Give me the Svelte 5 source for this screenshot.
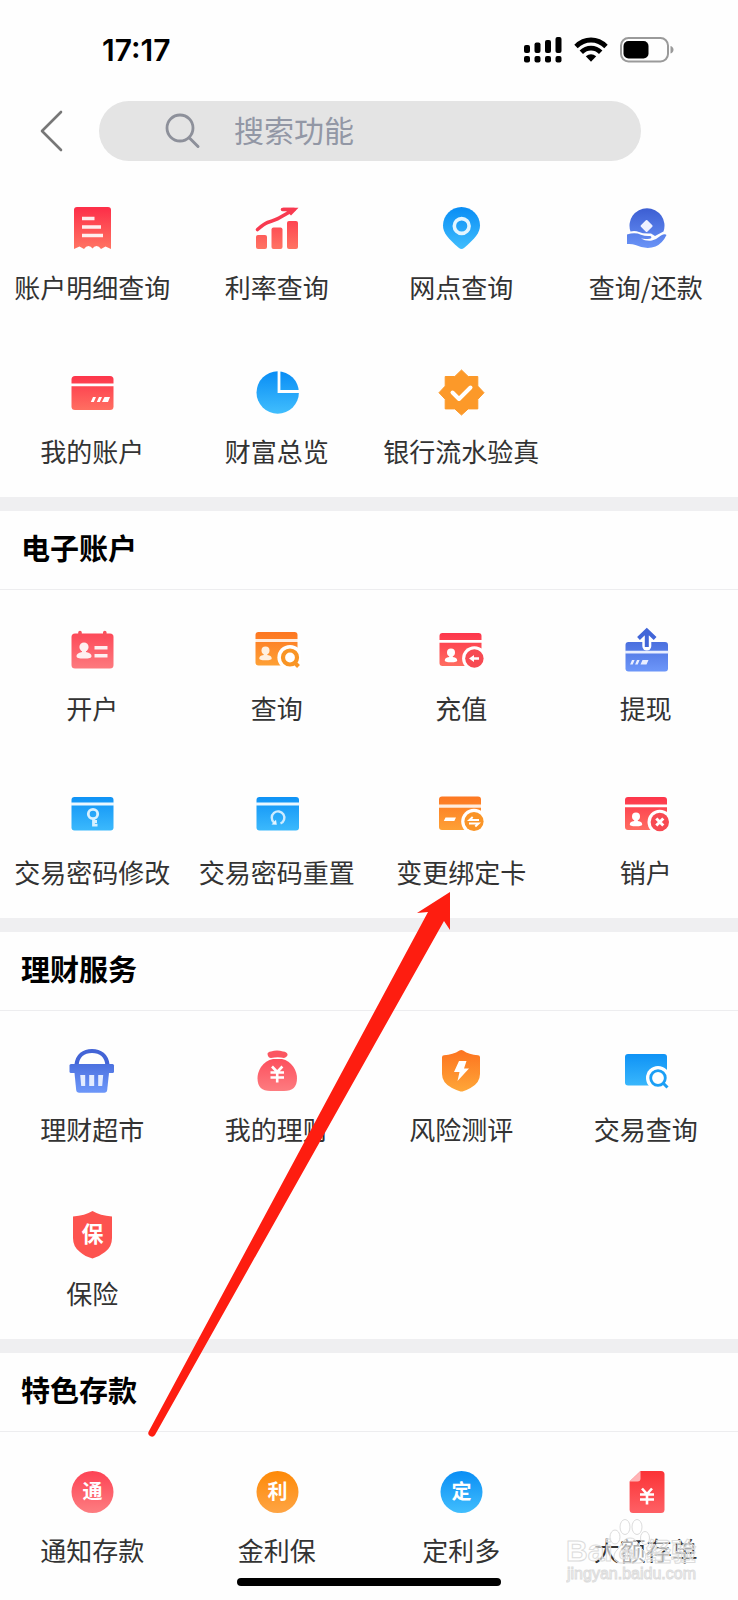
<script>
  const sections = [
    {
      id: 'common',
      items: [
        { icon: 'receipt', label: '账户明细查询' },
        { icon: 'rate', label: '利率查询' },
        { icon: 'pin', label: '网点查询' },
        { icon: 'repay', label: '查询/还款' },
        { icon: 'card', label: '我的账户' },
        { icon: 'pie', label: '财富总览' },
        { icon: 'verified', label: '银行流水验真' }
      ]
    },
    {
      id: 'account',
      title: '电子账户',
      items: [
        { icon: 'open', label: '开户' },
        { icon: 'cardSearch', label: '查询' },
        { icon: 'recharge', label: '充值' },
        { icon: 'withdraw', label: '提现' },
        { icon: 'key', label: '交易密码修改' },
        { icon: 'reset', label: '交易密码重置' },
        { icon: 'swap', label: '变更绑定卡' },
        { icon: 'close', label: '销户' }
      ]
    },
    {
      id: 'wealth',
      title: '理财服务',
      items: [
        { icon: 'basket', label: '理财超市' },
        { icon: 'bag', label: '我的理财' },
        { icon: 'risk', label: '风险测评' },
        { icon: 'tradeSearch', label: '交易查询' },
        { icon: 'insurance', label: '保险' }
      ]
    },
    {
      id: 'deposit',
      title: '特色存款',
      items: [
        { icon: 'coin', label: '通知存款', char: '通', fill: 'rose' },
        { icon: 'coin', label: '金利保', char: '利', fill: 'amber' },
        { icon: 'coin', label: '定利多', char: '定', fill: 'blue' },
        { icon: 'doc', label: '大额存单' }
      ]
    }
  ];

  const gradients = [
    { id: 'red', from: '#fd3049', to: '#ff7463' },
    { id: 'rose', from: '#fd4455', to: '#fd7c80' },
    { id: 'crimson', from: '#fb3437', to: '#fe5f64' },
    { id: 'orange', from: '#fd7420', to: '#fea638' },
    { id: 'amber', from: '#fe8a08', to: '#fea443' },
    { id: 'blue', from: '#0b8ff5', to: '#40bdfd' },
    { id: 'indigo', from: '#3d5fd3', to: '#6b95f8' }
  ];

  let keyword = $state('');
</script>

{#snippet person(x, y)}
  <circle cx={x} cy={y} r="4" />
  <path d="M{x - 1.8} {y + 2}h3.6v2.6c3.4.6 4.4 1.8 4.4 3.4 0 1.2-1.8 1.8-6.2 1.8s-6.2-.6-6.2-1.8c0-1.6 1-2.8 4.4-3.4z" />
{/snippet}

{#snippet icon(item)}
  <svg class="icon" viewBox="0 0 48 48" aria-hidden="true">
    {#if item.icon === 'receipt'}
      <path fill="url(#red)" d="M9 2h31a3 3 0 0 1 3 3v39l-5.500-2.500-4.500 2.500q-2-3-4.500-3t-4 2.500q-1.500-2.500-4-2.500T16 44l-4.500-2.500L6 44V5a3 3 0 0 1 3-3z" />
      <path stroke="#fff" stroke-width="3.400" d="M14 13.500h12.500M14 22h19M14 30.500h21" opacity=".9" />
    {:else if item.icon === 'rate'}
      <g fill="url(#red)">
        <rect x="3" y="30" width="11" height="14" rx="2" />
        <rect x="18.500" y="22.500" width="11" height="21.500" rx="2" />
        <rect x="34" y="16" width="11" height="28" rx="2" />
      </g>
      <path fill="none" stroke="#f83a50" stroke-width="3.600" stroke-linecap="round" stroke-linejoin="round" d="M4.500 24.500q7-6 10-7 9-3 11.500-4.500L41 4.500H29.500" />
      <path fill="#f83a50" d="M30 2.700h15.500L38 10.500z" />
    {:else if item.icon === 'pin'}
      <path fill="url(#blue)" d="M24.500 2C14.300 2 6 10.300 6 20.500c0 7.500 5.200 13 16 22.600q2.500 2 5 0C37.800 33.500 43 28 43 20.500 43 10.300 34.700 2 24.500 2z" />
      <circle cx="24.700" cy="21" r="7.400" fill="none" stroke="#e3f5ff" stroke-width="3.600" />
    {:else if item.icon === 'repay'}
      <path fill="url(#indigo)" d="M8.500 26.500A17.500 17.500 0 1 1 41.500 26.500L33 31l-4-2.500q-8 .5-12-1.500-4-1.500-8.500-.5z" />
      <path fill="#eef1ff" stroke="#eef1ff" stroke-width="2" stroke-linejoin="round" d="M24.600 16l5 5-5 5-5-5z" />
      <path fill="url(#indigo)" d="M5 29.500q8-2.500 14 .2 4 1.600 8.500 1.300c2.500 0 2.500 2.500.2 2.700q-5 .6-8.700-.2 5 3 11 2 5-1.500 9-5 4-2 5.500-.5-4 8.500-11 11.500-9 3.500-20-1.500-4-1.500-8.500-1z" />
    {:else if item.icon === 'card'}
      <rect x="3.500" y="7" width="42" height="34" rx="3.500" fill="url(#red)" />
      <path fill="#fff" d="M3 14.500h43v2.800H3zM25 28h3l-2.200 5h-3zM31 28h3l-2.200 5h-3zM36.500 28h5.500l-2 5h-6z" />
    {:else if item.icon === 'pie'}
      <circle cx="24.700" cy="23.500" r="21.200" fill="url(#blue)" />
      <path fill="none" stroke="#fff" stroke-width="2.800" d="M26 1v21.500h21" />
    {:else if item.icon === 'verified'}
      <path fill="#fc9929" stroke="#fc9929" stroke-linejoin="round" d="M24.500 1l6.700 6.500h9.600v9.600l6.200 6.600-6.200 6.600v9.600h-9.600l-6.700 6.100-6.700-6.100H8.200v-9.600L2 23.700l6.200-6.600V7.500h9.600z" />
      <path fill="none" stroke="#fff" stroke-width="4" stroke-linecap="round" stroke-linejoin="round" d="M15.500 23.500l6.500 6.500 11.500-11.500" />
    {:else if item.icon === 'open'}
      <rect x="3.500" y="7.500" width="42" height="35" rx="3.500" fill="url(#rose)" />
      <path stroke="#f8505c" stroke-width="3.600" stroke-linecap="round" d="M12 6.500v4.500M36.800 6.500v4.500" />
      <g fill="#fff" opacity=".9">
        <circle cx="16" cy="21" r="4.600" />
        <path d="M14 23h4v3c4 .8 5.500 2.300 5.500 4 0 2-2 2.600-7.500 2.600S8.500 32 8.500 30c0-1.700 1.500-3.200 5.500-4z" />
        <path d="M26.500 20h13v3.400h-13zM26.500 28h13v3.400h-13z" />
      </g>
    {:else if item.icon === 'cardSearch'}
      <rect x="2.500" y="6" width="42" height="33.500" rx="3" fill="url(#orange)" />
      <path fill="#fff" opacity=".85" d="M2 13h43v3H2z" />
      <g fill="#fff0df">{@render person(12.500, 24.500)}</g>
      <circle cx="37" cy="31.500" r="12.600" fill="#fff" />
      <circle cx="37" cy="31.500" r="7" fill="none" stroke="#f99525" stroke-width="4.200" />
      <path stroke="#f99525" stroke-width="4" d="M41 36l4.500 4.500" />
    {:else if item.icon === 'recharge'}
      <rect x="2.500" y="7" width="42" height="33" rx="3" fill="url(#red)" />
      <path fill="#fff" d="M2 14h43v2.800H2z" />
      <g fill="#fff">{@render person(14, 26.500)}</g>
      <circle cx="37.400" cy="32.500" r="12.300" fill="#fff" />
      <circle cx="37.400" cy="32.500" r="9.200" fill="#f74a52" />
      <path fill="#fff" d="M32 32.500l5-3.500v2.300h5v2.400h-5V36z" />
    {:else if item.icon === 'withdraw'}
      <rect x="3.500" y="16" width="42.500" height="29.500" rx="3" fill="url(#indigo)" />
      <path fill="#e8eeff" d="M3 24.800h43.500v2.800H3zM10 34h2.600l-1.900 4.500H8.100zM15 34h2.600l-1.900 4.500h-2.600zM20.500 34h6l-2 4.500h-6z" />
      <path fill="none" stroke="#fff" stroke-width="9" stroke-linecap="round" d="M24.800 10v10" />
      <path fill="none" stroke="#4165d8" stroke-width="4" stroke-linejoin="miter" d="M16.500 12.500l8.300-8 8.300 8M24.800 5v16" />
    {:else if item.icon === 'key'}
      <rect x="3.500" y="7" width="42" height="33.500" rx="3" fill="url(#blue)" />
      <path fill="#eaf7ff" d="M3 12.600h43v2.800H3z" />
      <g fill="none" stroke="#d8f1ff" stroke-width="2.800">
        <circle cx="25" cy="24" r="4.700" />
        <path d="M25.500 28.500V36.500M26 31.500h3M26 35.200h3.500" />
      </g>
    {:else if item.icon === 'reset'}
      <rect x="3.500" y="7" width="42.500" height="33.500" rx="3" fill="url(#blue)" />
      <path fill="#eaf7ff" d="M3 12.600h43.500v2.800H3z" />
      <path fill="none" stroke="#cdebff" stroke-width="2.400" d="M27.500 33.500a6.300 6.300 0 1 0-6.500-1" />
      <path fill="#e6f6ff" d="M18.500 34.500l5.300.3-.8-5z" />
    {:else if item.icon === 'swap'}
      <rect x="2" y="6.500" width="42" height="33.500" rx="3" fill="url(#orange)" />
      <path fill="#fff" opacity=".85" d="M1 14.500h44v3.200H1z" />
      <path fill="#fff" d="M8.500 27.500H19l-1.700 3.600H6.800z" />
      <circle cx="37" cy="31.500" r="12.800" fill="#fff" />
      <circle cx="37" cy="31.500" r="9.600" fill="#fa9528" />
      <path fill="none" stroke="#fff" stroke-width="2" d="M42 30H32.500l3.200-3M32 33.500h9.500l-3.200 3" />
    {:else if item.icon === 'close'}
      <rect x="3" y="7" width="42" height="33" rx="3" fill="url(#red)" />
      <path fill="#fff" d="M2 14.500h44v2.800H2z" />
      <g fill="#fff">{@render person(14, 26.500)}</g>
      <circle cx="37.800" cy="32" r="12.300" fill="#fff" />
      <circle cx="37.800" cy="32" r="9.200" fill="#f74a52" />
      <path stroke="#fff" stroke-width="3" d="M34.300 28.500l7 7M41.300 28.500l-7 7" />
    {:else if item.icon === 'basket'}
      <path fill="none" stroke="#4364d6" stroke-width="4.200" d="M8.500 18C9.500 8.500 16 4 24 4s14.500 4.500 15.500 14" />
      <rect x="1.500" y="17" width="44.500" height="9" rx="1.500" fill="url(#indigo)" />
      <path fill="url(#indigo)" d="M6.500 26h34.500l-1.800 17q-.3 2.700-3 2.700h-25q-2.700 0-3-2.700z" />
      <path fill="#e3ecff" d="M12.200 28h5v11h-4zM21.200 28h5v11h-5zM30.200 28h5l-1 11h-4z" />
    {:else if item.icon === 'bag'}
      <path fill="#fb5661" d="M14.500 7q0-2 3.500-2.500 6-1.800 12 0 4 .5 4.500 2.800T31 11q-6-1.600-13 0-3 0-3.500-4z" />
      <path fill="url(#rose)" d="M20 12h9q7 1.500 11.500 8 3.500 5.500 3.500 11.500 0 12.500-13 12.500H17.500q-13 0-13-12.500 0-6 3.500-11.500Q12.500 13.500 20 12z" />
      <path fill="none" stroke="#fff" stroke-width="2.600" d="M19 19.500l5.200 5.500 5.200-5.500M17.500 25.500h13.500M17.500 30.500h13.500M24.200 25v10.500" />
    {:else if item.icon === 'risk'}
      <path fill="url(#orange)" d="M22.500 3.500q1.800-1.200 3.600 0Q32 7.800 41 8.200q2 0 2 2V27q0 9-9.500 14-4.500 2.500-8 3.500h-2Q20 43.500 15 41 5 36 5 27V10.200q0-2 2-2 9-.4 15.500-4.700z" />
      <path fill="#fff" d="M22 14h7.500l-2.500 7.500h5L20.500 34l2-9H17z" />
    {:else if item.icon === 'tradeSearch'}
      <rect x="3" y="7" width="42" height="31.500" rx="3" fill="url(#blue)" />
      <circle cx="36" cy="31" r="12" fill="#fff" />
      <circle cx="36" cy="31" r="7.300" fill="none" stroke="#1c9ff5" stroke-width="2.800" />
      <path stroke="#1c9ff5" stroke-width="3" d="M41 36l4.500 4.500" />
    {:else if item.icon === 'insurance'}
      <path fill="#fd534f" d="M24.500 0Q32 4.500 44 5.500V27q0 9-7 14-5.500 4.500-12.500 6.500Q17 45.500 12 41 5 36 5 27V5.500Q17 4.500 24.500 0z" />
      <text class="glyph" x="24.500" y="31" font-size="22">保</text>
    {:else if item.icon === 'coin'}
      <circle cx="24.500" cy="24" r="21" fill="url(#{item.fill})" />
      <text class="glyph" x="24.500" y="31" font-size="20">{item.char}</text>
    {:else if item.icon === 'doc'}
      <path fill="url(#crimson)" d="M18.500 3H39q3.500 0 3.500 3.500v35q0 3.500-3.500 3.500H11q-3.400 0-3.400-3.500V13.500z" />
      <path fill="#ffb3b5" d="M18.500 3v7.500q0 3-3 3H7.600z" />
      <path fill="none" stroke="#fff" stroke-width="2.600" d="M20 20.500l5 5.500 5-5.500M18 26.500h14M18 31.500h14M25 26v10.500" />
    {/if}
  </svg>
{/snippet}

<svg class="defs" aria-hidden="true">
  <defs>
    {#each gradients as g}
      <linearGradient id={g.id} gradientUnits="userSpaceOnUse" x1="0" y1="4" x2="0" y2="44">
        <stop offset="0" stop-color={g.from} />
        <stop offset="1" stop-color={g.to} />
      </linearGradient>
    {/each}
  </defs>
</svg>

<div class="page">
  <header>
    <div class="status">
      <time>17:17</time>
      <div class="status-icons">
        <svg width="38" height="26" viewBox="0 0 38 26" aria-hidden="true">
          <rect x="0" y="8" width="6" height="8" rx="2" />
          <rect x="10.500" y="5.500" width="6" height="10.500" rx="2" />
          <rect x="21" y="3" width="6" height="13" rx="2" />
          <rect x="31.500" y="0" width="6" height="16" rx="2" />
          <rect x="0" y="19" width="6" height="6.500" rx="2" />
          <rect x="10.500" y="19" width="6" height="6.500" rx="2" />
          <rect x="21" y="19" width="6" height="6.500" rx="2" />
          <rect x="31.500" y="19" width="6" height="6.500" rx="2" />
        </svg>
        <svg width="34" height="26" viewBox="0 0 34 26" aria-hidden="true">
          <g fill="none" stroke="#000" stroke-width="4.800">
            <path d="M2 9.500q6.500-6.500 15-6.500t15 6.500" />
            <path d="M7.300 15.300q4.200-4.200 9.700-4.200t9.700 4.200" />
          </g>
          <path d="M11.800 19.300Q17 15 22.200 19.300L17 24.800z" />
        </svg>
        <svg width="54" height="26" viewBox="0 0 54 26" aria-hidden="true">
          <rect x="1" y="1" width="47" height="23.500" rx="7.500" fill="none" stroke="#9a9a9a" stroke-width="2" />
          <rect x="3.500" y="4" width="25" height="17.500" rx="5" />
          <path fill="#9a9a9a" d="M50.500 9q3 1 3 3.800t-3 3.800z" />
        </svg>
      </div>
    </div>
    <div class="nav">
      <button class="back" aria-label="返回">
        <svg width="24" height="42" viewBox="0 0 24 42" fill="none" aria-hidden="true">
          <path d="M21 2L2 21l19 19" stroke="#777" stroke-width="2.600" stroke-linecap="round" stroke-linejoin="round" />
        </svg>
      </button>
      <label class="search">
        <svg width="36" height="36" viewBox="0 0 36 36" fill="none" aria-hidden="true">
          <circle cx="15" cy="15" r="13" stroke="#8d909a" stroke-width="2.800" />
          <path d="M24.500 25L33 33.500" stroke="#8d909a" stroke-width="3" stroke-linecap="round" />
        </svg>
        <input type="text" placeholder="搜索功能" aria-label="搜索功能" bind:value={keyword} />
      </label>
    </div>
  </header>

  <main>
    {#each sections as section (section.id)}
      <section>
        {#if section.title}
          <h2>{section.title}</h2>
        {/if}
        <div class="grid">
          {#each section.items as item}
            <button class="item">
              {@render icon(item)}
              <span>{item.label}</span>
            </button>
          {/each}
        </div>
      </section>
    {/each}
  </main>

  <!-- pointer from the deposit title up to 变更绑定卡 -->
  <svg class="pointer" width="304" height="548" viewBox="0 0 304 548" aria-hidden="true">
    <path fill="#fe1d10" d="M303 2L270 23l11-1L2 541a3.600 3.600 0 0 0 6 4L297 31l6 9z" />
  </svg>

  <svg class="watermark" width="136" height="68" viewBox="0 0 136 68" aria-hidden="true">
    <g fill="#fff" fill-opacity=".6" stroke="#dcdcdc">
      <text x="0" y="43" font-size="30" font-weight="700">Bai</text>
      <text x="80" y="43" font-size="25" font-weight="700">经验</text>
      <ellipse cx="49" cy="19" rx="5" ry="7" />
      <ellipse cx="59" cy="9" rx="5" ry="7.500" />
      <ellipse cx="71" cy="9" rx="5" ry="7.500" />
      <ellipse cx="79" cy="20" rx="4.500" ry="6.500" />
      <path d="M64 20c7 0 8 7 13 12s3 13-4 13H55c-8 0-9-8-4-13s6-12 13-12z" />
      <text x="53" y="41" font-size="16" font-weight="700">du</text>
      <text x="1" y="61" font-size="16">jingyan.baidu.com</text>
    </g>
  </svg>

  <div class="home-bar"></div>
</div>

<style>
  :global(body) {
    margin: 0;
    background: #fefefe;
  }

  .defs {
    position: absolute;
    width: 0;
    height: 0;
  }

  .page {
    position: relative;
    font-family: 'Noto Sans CJK SC', sans-serif;
    color: #333;
    overflow: hidden;
  }

  button {
    border: none;
    padding: 0;
    background: none;
    color: inherit;
    font: inherit;
    cursor: pointer;
  }

  .status {
    display: flex;
    align-items: center;
    justify-content: space-between;
    height: 100px;
    padding: 0 64px 0 102px;
  }

  time {
    font-family: Inter, sans-serif;
    font-size: 30px;
    font-weight: 600;
    color: #000;
  }

  .status-icons {
    display: flex;
    gap: 12px;
  }

  .nav {
    display: flex;
    align-items: center;
    padding: 1px 97px 8px 0;
  }

  .back {
    display: flex;
    width: 99px;
    padding-left: 40px;
    box-sizing: border-box;
    flex-shrink: 0;
  }

  .search {
    display: flex;
    align-items: center;
    flex: 1;
    gap: 33px;
    min-width: 0;
    height: 60px;
    padding: 0 32px 0 66px;
    box-sizing: border-box;
    border-radius: 30px;
    background: #e4e4e4;
  }

  .search svg {
    flex-shrink: 0;
  }

  .search input {
    flex: 1;
    min-width: 0;
    padding: 0 0 4px;
    border: none;
    outline: none;
    background: transparent;
    color: #333;
    font: inherit;
    font-size: 30px;
    line-height: 44px;
  }

  .search input::placeholder {
    color: #9297a5;
    opacity: 1;
  }

  section + section {
    border-top: 14px solid #efeff1;
  }

  h2 {
    margin: 0;
    padding: 14px 21px 20px;
    border-bottom: 1px solid #ededef;
    color: #000;
    font-size: 29px;
    font-weight: 700;
    line-height: 44px;
  }

  .grid {
    display: grid;
    grid-template-columns: repeat(4, 1fr);
  }

  .item {
    display: flex;
    flex-direction: column;
    align-items: center;
    gap: 16px;
    padding: 36px 0 28px;
  }

  .item span {
    font-size: 26px;
    line-height: 36px;
    white-space: nowrap;
  }

  .icon {
    width: 48px;
    height: 48px;
  }

  .glyph {
    fill: #fff;
    font-weight: 700;
    text-anchor: middle;
  }

  .pointer {
    position: absolute;
    top: 890px;
    left: 147px;
    pointer-events: none;
  }

  .watermark {
    position: absolute;
    right: 36px;
    bottom: 10px;
    font-family: 'Liberation Sans', 'Noto Sans CJK SC', sans-serif;
    pointer-events: none;
  }

  .home-bar {
    position: fixed;
    bottom: 14px;
    left: 50%;
    width: 264px;
    height: 8px;
    border-radius: 4px;
    background: #000;
    transform: translateX(-50%);
  }
</style>
